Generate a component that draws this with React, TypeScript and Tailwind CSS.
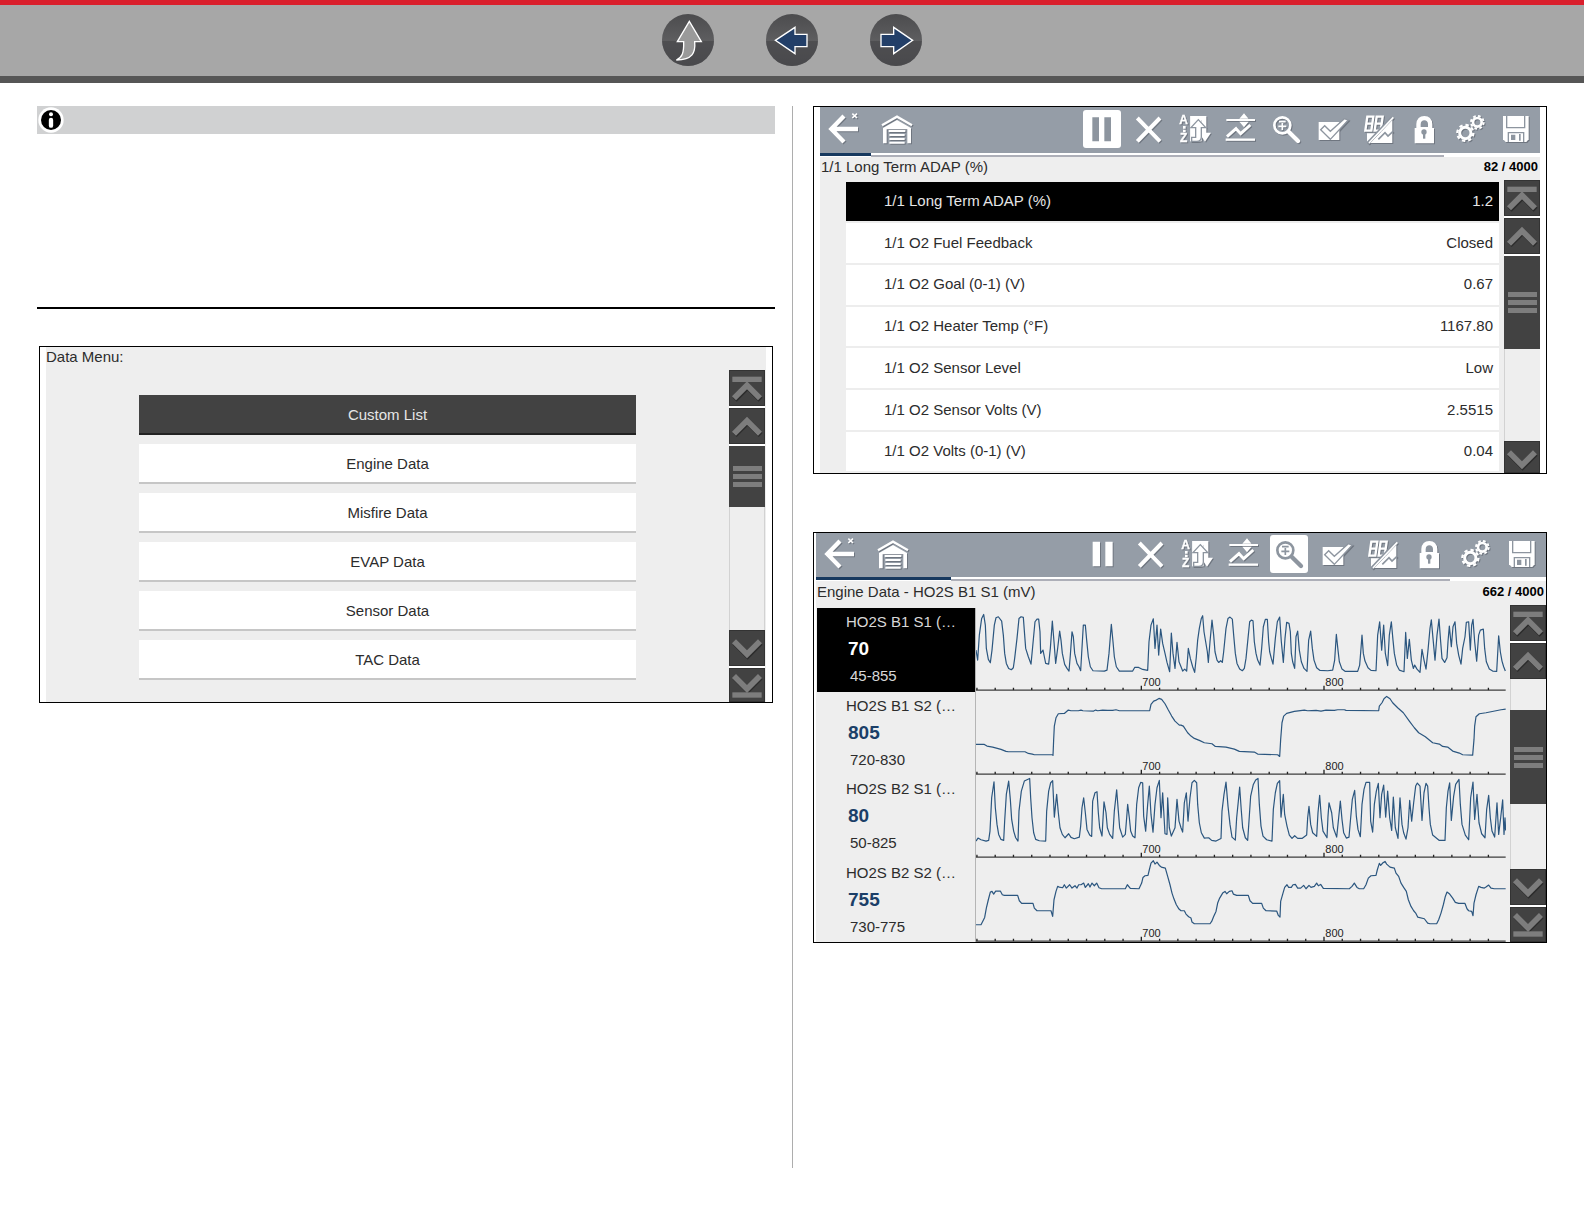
import React from "react";

type Kind = "top" | "up" | "down" | "bottom";

const arrowPaths: Record<Kind, { d: string; bar?: number; label: string }> = {
  top: { d: "M15 85 54 46 93 85", bar: 20, label: "Scroll to top" },
  up: { d: "M15 77 54 38 93 77", label: "Scroll up" },
  down: { d: "M15 34 54 73 93 34", label: "Scroll down" },
  bottom: { d: "M15 24 54 63 93 24", bar: 73, label: "Scroll to bottom" },
};

function ScrollButton({ kind, className = "h-9" }: { kind: Kind; className?: string }) {
  const a = arrowPaths[kind];
  return (
    <button aria-label={a.label} className={`w-9 shrink-0 overflow-hidden bg-[#424242] outline-1 -outline-offset-1 outline-[#333] ${className}`}>
      <svg viewBox="0 0 108 108" className="block h-9 w-9" fill="none">
        <path d={a.d} stroke="#2c2c2c" strokeWidth="17" transform="translate(2 4)" />
        <path d={a.d} stroke="#7d7d7d" strokeWidth="17" />
        {a.bar !== undefined && <path d={`M10 ${a.bar + 8}h88`} stroke="#7d7d7d" strokeWidth="16" />}
      </svg>
    </button>
  );
}

function Thumb({ className }: { className: string }) {
  return (
    <div className={`flex w-9 shrink-0 flex-col items-center justify-center gap-[3px] bg-[#424242] ${className}`}>
      <span className="h-[5px] w-[29px] bg-[#7d7d7d]" />
      <span className="h-[5px] w-[29px] bg-[#7d7d7d]" />
      <span className="h-[5px] w-[29px] bg-[#7d7d7d]" />
    </div>
  );
}

const G = "#8d959f";

function Arrow() {
  return (
    <g fill="none" stroke="#fff">
      <path d="M60 18 22 57l38 39M22 57h80" strokeWidth="13" />
      <path d="m85 11 14 13m0-13L85 24" strokeWidth="5" />
    </g>
  );
}

function Garage() {
  return (
    <g>
      <path d="M12 46 57 20l45 26" fill="none" stroke="#fff" strokeWidth="7" />
      <path d="M15 100V54l42-24 42 24v46H88V58H26v42z" fill="#fff" />
      <path d="M32 63h50M34 75h46M34 87h46M34 98h46" stroke="#fff" strokeWidth="6" />
    </g>
  );
}

const tools: { label: string; icon: (on: boolean) => React.ReactNode }[] = [
  {
    label: "Pause",
    icon: (on) => <path d={on ? "M28 22h20v72H28zM64 22h20v72H64z" : "M26 20h22v74H26zM64 20h22v74H64z"} fill={on ? G : "#fff"} />,
  },
  { label: "Clear", icon: () => <path d="m25 24 68 70M93 24 25 94" stroke="#fff" strokeWidth="12" /> },
  {
    label: "Sort",
    icon: () => (
      <g>
        <g fill="#fff" stroke="#fff" strokeWidth="1" fontFamily="Liberation Sans" fontWeight="700" fontSize="36">
          <text x="13" y="43">A</text>
          <text x="15" y="96">Z</text>
        </g>
        <path d="M24 48h8v8h-8zM24 59h8v8h-8z" fill="#fff" />
        <path d="M46 18h48v50h14L90 95 72 68h8V30H60v64H46z" fill="#fff" />
        <path d="M46 18h34v76H46z" fill="#fff" />
        <path d="M70 29 92 53H79v28q0 13-14 13H50V82h12V53H48z" fill="#fff" stroke={G} strokeWidth="4" />
      </g>
    ),
  },
  {
    label: "Scale",
    icon: () => (
      <g fill="none" stroke="#fff">
        <path d="M16 30h86" strokeWidth="6" />
        <path d="m69 10 14 16H55zM69 52l14-17H55z" fill="#fff" stroke="none" />
        <path d="m18 80 27-24 14 15 29-26" strokeWidth="9" />
        <path d="M14 89h88" strokeWidth="7" />
      </g>
    ),
  },
  {
    label: "Zoom",
    icon: (on) => (
      <g fill="none" stroke={on ? G : "#fff"}>
        <circle cx="46" cy="46" r="24" strokeWidth="8" />
        <path d="M36 35h20M34 49h24M46 39v21" strokeWidth="5" />
        <path d="m65 65 28 28" strokeWidth="13" strokeLinecap="round" />
      </g>
    ),
  },
  {
    label: "Select",
    icon: () => (
      <g>
        <path d="M17 36h62v54H17z" fill="#fff" />
        <path d="m23 59 12-12 17 17 42-38 12 4-54 58z" fill="#fff" stroke={G} strokeWidth="4" />
      </g>
    ),
  },
  {
    label: "Graph or list",
    icon: () => (
      <g>
        <path d="M100 30v69H34z" fill="#fff" />
        <path d="M24 70h34L24 97z" fill="#fff" />
        <g fill="none" stroke="#fff" strokeWidth="7">
          <path d="M25 20h18l-6 42H19zM22 41h18M53 20h18l-6 42H47zM50 41h18" />
        </g>
        <path d="M100 22 26 100" stroke={G} strokeWidth="10" />
        <path d="M103 22 30 99" stroke="#fff" strokeWidth="5" />
        <path d="m58 88 20-20 9 10 15-14" fill="none" stroke={G} strokeWidth="5" />
      </g>
    ),
  },
  {
    label: "Lock",
    icon: () => (
      <g>
        <path d="M29 100V54h5V42Q36 18 58 18t24 24v12h5v46z" fill="#fff" />
        <path d="M47 51V42q1-11 11-11t11 11v9z" fill={G} />
        <circle cx="57" cy="66" r="8" fill={G} />
        <path d="M54 66h7v20h-7z" fill={G} />
      </g>
    ),
  },
  {
    label: "Settings",
    icon: () => (
      <g fill="none" stroke="#fff">
        <circle cx="43" cy="69" r="17" strokeWidth="9" />
        <circle cx="43" cy="69" r="24" strokeWidth="7" strokeDasharray="10 8.8" />
        <circle cx="79" cy="37" r="13" strokeWidth="8" />
        <circle cx="79" cy="37" r="19" strokeWidth="6" strokeDasharray="8 6.9" />
      </g>
    ),
  },
  {
    label: "Save",
    icon: () => (
      <g>
        <path d="M18 18h77v70l-7 8H26l-8-8z" fill="#fff" />
        <path d="M29 18v35h54V18M34 96V68h46v28" fill="none" stroke={G} strokeWidth="4" />
        <path d="M42 74h13v16H42zM66 72h5v20h-5z" fill={G} />
      </g>
    ),
  },
];

function IconButton({ label, on = false, children }: { label: string; on?: boolean; children: React.ReactNode }) {
  return (
    <button aria-label={label} aria-pressed={on} className={`h-[38px] w-[38px] shrink-0 rounded-[3px] ${on ? "bg-white" : ""}`}>
      <svg viewBox="0 0 114 114" className={`block h-[38px] w-[38px] ${on ? "" : "drop-shadow-[1px_1px_0px_#6f7680]"}`}>
        {children}
      </svg>
    </button>
  );
}

function Toolbar({ active, className, toolsClass }: { active: string; className: string; toolsClass: string }) {
  return (
    <div className={`flex items-center justify-between bg-[#959da7] pb-0.5 pl-1 ${className}`}>
      <div className="flex gap-4">
        <IconButton label="Back"><Arrow /></IconButton>
        <IconButton label="Garage"><Garage /></IconButton>
      </div>
      <div className={`flex justify-between ${toolsClass}`}>
        {tools.map((t) => (
          <IconButton key={t.label} label={t.label} on={t.label === active}>
            {t.icon(t.label === active)}
          </IconButton>
        ))}
      </div>
    </div>
  );
}

function Progress({ done, rest }: { done: string; rest: string }) {
  return (
    <div className="flex h-1 bg-white">
      <div className={`h-[3px] bg-[#17395f] ${done}`} />
      <div className="flex flex-1 items-end">
        <div className={`h-0.5 bg-[#adafb8] ${rest}`} />
      </div>
    </div>
  );
}

const menu = ["Custom List", "Engine Data", "Misfire Data", "EVAP Data", "Sensor Data", "TAC Data"];

function DataMenu() {
  return (
    <div className="mx-0.5 mt-[37px] border border-black bg-white px-1.5">
      <div className="flex bg-[#eee] pr-px">
        <div className="flex-1">
          <h2 className="leading-5">Data Menu:</h2>
          <div className="flex flex-col gap-[9px] px-[93px] pt-7 pb-[22px]">
            {menu.map((m, i) => (
              <button
                key={m}
                className={i === 0 ? "h-10 border-b-2 border-[#222] bg-[#424242] pt-0.5 text-[#e6e6e6]" : "h-10 border-b-2 border-[#c6c6c6] bg-white pt-0.5"}
              >
                {m}
              </button>
            ))}
          </div>
        </div>
        <div className="mt-[23px] flex w-9 flex-col">
          <div className="flex flex-col gap-0.5 bg-white pb-0.5">
            <ScrollButton kind="top" />
            <ScrollButton kind="up" />
          </div>
          <Thumb className="h-[61px]" />
          <div className="flex-1 border-x border-[#d2d2d2]" />
          <div className="flex flex-col gap-0.5 bg-white">
            <ScrollButton kind="down" />
            <ScrollButton kind="bottom" className="h-[34px]" />
          </div>
        </div>
      </div>
    </div>
  );
}

const params = [
  ["Long Term ADAP (%)", "1.2"],
  ["O2 Fuel Feedback", "Closed"],
  ["O2 Goal (0-1) (V)", "0.67"],
  ["O2 Heater Temp (°F)", "1167.80"],
  ["O2 Sensor Level", "Low"],
  ["O2 Sensor Volts (V)", "2.5515"],
  ["O2 Volts (0-1) (V)", "0.04"],
];

function ParameterList() {
  return (
    <div className="border border-black bg-white px-1.5">
      <Toolbar active="Pause" className="h-[46px] pr-[5px]" toolsClass="w-[452px]" />
      <div className="bg-[#eee]">
        <Progress done="w-[51px]" rest="w-[573px]" />
        <div className="flex items-center justify-between pl-px leading-5">
          <h2>1/1 Long Term ADAP (%)</h2>
          <span className="pr-0.5 text-[13px] font-bold text-black">82 / 4000</span>
        </div>
        <div className="flex pt-[3px]">
          <div className="flex-1 pt-0.5 pr-[5px] pl-[26px]">
            <table className="h-[289px] w-full border-collapse bg-white">
              <tbody>
                {params.map(([name, value], i) => (
                  <tr key={name} className={i === 0 ? "bg-black text-[#e6e6e6]" : "border-t-2 border-[#ededed]"}>
                    <td className="p-0 pl-[38px]">1/1 {name}</td>
                    <td className="p-0 pr-1.5 text-right">{value}</td>
                  </tr>
                ))}
              </tbody>
            </table>
          </div>
          <div className="flex w-9 flex-col">
            <div className="flex flex-col gap-0.5 bg-white pb-0.5">
              <ScrollButton kind="top" />
              <ScrollButton kind="up" />
            </div>
            <Thumb className="h-[93px]" />
            <div className="h-[92px] border-l border-[#d2d2d2]" />
            <ScrollButton kind="down" className="h-8" />
          </div>
        </div>
      </div>
    </div>
  );
}

/* Each trace is recorded in two spans; x and y are thirds of a pixel. */
const channels = [
  {
    name: "HO2S B1 S1 (…",
    value: "70",
    range: "45-855",
    y: 249,
    first:
      "515,375 520,405 525,330 532,280 538,268 543,300 546,370 552,403 558,413 563,375 570,300 575,278 582,275 592,288 597,330 601,385 606,415 613,430 621,434 627,428 631,400 638,340 644,280 650,275 657,277 661,330 664,370 672,395 680,417 685,365 692,290 698,282 703,282 707,320 709,385 716,375 720,395 724,415 733,417 738,370 744,288 749,350 754,415 760,370 766,318 770,345 774,385 781,418 788,430 794,438 798,390 803,320 807,335 811,385 818,415 824,425 829,437 832,385 837,300 843,300 847,345 852,395 858,425 866,437 900,438 908,435 914,385 921,298 926,350 930,395 936,425 945,438 985,438 991,427 1003,427 1015,433 1030,436 1034,350 1040,300 1047,281 1052,370 1058,300 1063,390 1069,312 1075,355 1082,385 1088,412 1096,440 1101,324 1106,385 1112,430 1118,352 1124,410",
    second:
      "5,425 10,438 16,432 22,438 27,370 33,400 40,425 46,442 51,395 55,345 60,310 66,280 70,272 74,320 79,350 84,380 87,412 92,350 98,285 103,330 107,380 113,405 118,412 124,407 129,412 133,380 140,310 146,280 152,276 159,282 163,330 168,385 173,415 181,432 189,437 195,430 200,400 206,340 211,290 216,285 221,287 225,350 230,385 235,405 242,420 247,370 252,305 258,283 264,283 268,350 271,380 276,400 281,417 288,340 294,290 301,276 306,350 312,412 317,340 322,292 329,295 333,320 336,385 340,410 346,430 350,335 355,318 360,375 366,410 374,430 383,439 388,345 394,318 399,370 404,405 412,428 422,436 445,437 460,435 466,405 471,328 476,375 480,410 488,432 498,439 535,439 541,420 545,370 548,330 552,385 557,408 566,428 575,436 590,437 595,330 601,290 607,375 613,300 618,385 625,422 630,330 636,290 641,345 645,385 652,420 660,435 674,440 679,322 684,400 690,343 696,405 702,430 706,420 713,432 722,442 728,373 734,405 740,432 746,375 752,310 756,284 761,340 767,405 773,330 779,282 784,350 788,400 796,412 803,398 806,350 810,303 816,365 821,305 827,290 832,355 838,390 845,417 850,370 857,335 861,292 868,290 873,375 877,300 881,283 886,350 892,408 898,330 903,315 912,312 916,370 921,410 930,432 940,438 952,439 958,332 963,380 968,408 973,425 978,438",
  },
  {
    name: "HO2S B1 S2 (…",
    value: "805",
    range: "720-830",
    y: 498,
    first:
      "515,655 540,655 548,660 565,663 590,670 605,676 612,677 662,677 672,682 684,684 690,686 745,686 746,688 748,640 750,600 755,575 762,563 780,562 792,552 800,554 822,554 830,552 836,554 868,555 874,552 880,554 895,552 910,553 925,553 935,551 945,554 1036,554 1040,535 1048,525 1056,522 1064,517 1072,520 1082,533 1092,552 1102,570 1112,585 1125,597",
    second:
      "5,597 12,600 25,620 35,630 45,637 60,643 75,650 98,653 108,661 140,663 165,669 180,676 225,678 235,684 295,686 301,691 304,640 308,590 313,570 322,562 345,556 375,552 385,554 410,553 425,555 440,552 465,553 475,551 495,551 500,553 598,554 600,540 608,530 614,518 622,511 632,518 640,530 655,545 672,560 690,585 705,605 718,620 738,632 760,650 780,654 790,661 805,663 820,675 840,681 850,686 880,687 884,640 886,600 890,572 900,563 920,560 950,554 965,551 979,549",
  },
  {
    name: "HO2S B2 S1 (…",
    value: "80",
    range: "50-825",
    y: 132,
    first:
      "515,330 521,321 530,326 545,330 553,328 557,300 562,200 569,152 573,230 578,280 583,310 590,325 598,328 601,270 606,190 613,150 618,205 622,265 628,300 634,320 641,330 644,240 651,180 660,150 676,142 679,200 683,260 688,305 694,325 705,329 724,330 727,240 733,180 739,155 745,149 750,258 757,190 762,245 767,290 774,310 782,320 793,308 800,319 810,323 825,318 829,285 833,230 838,200 843,245 848,295 856,312 862,316 865,210 872,185 878,182 882,245 886,290 893,315 899,212 905,245 909,290 916,310 925,322 930,240 937,176 942,240 946,290 955,318 963,310 967,260 970,220 975,260 979,300 985,315 992,320 997,220 1003,170 1009,154 1015,155 1018,255 1024,300 1030,220 1035,165 1040,250 1046,303 1052,220 1058,170 1065,148 1070,260 1075,185 1082,308 1088,310 1090,200 1095,290 1101,315 1112,290 1118,205 1124,270",
    second:
      "5,290 10,303 15,215 21,185 26,270 32,200 38,155 45,148 52,155 55,220 60,275 66,305 75,321 88,320 97,328 110,330 125,322 128,240 134,190 140,153 146,225 152,280 158,318 168,327 172,260 177,210 181,168 186,240 190,290 198,320 205,328 210,255 214,195 222,160 229,147 236,142 240,220 245,285 251,315 262,326 278,330 282,235 288,185 294,157 301,149 305,258 312,190 316,250 323,285 330,312 338,322 346,314 355,322 368,322 382,312 385,260 389,226 394,280 400,305 412,316 416,245 421,193 426,260 431,300 443,320 446,255 449,215 457,245 462,290 472,318 478,260 483,210 488,265 493,305 501,321 509,318 514,260 519,205 526,178 531,255 536,295 543,317 548,220 554,175 560,154 571,154 574,270 580,303 585,220 591,180 597,157 602,260 607,190 613,162 619,258 625,180 631,260 637,298 642,198 648,290 656,322 662,200 668,280 673,305 680,324 686,290 691,208 697,270 703,215 709,165 714,156 722,165 728,268 734,185 740,157 745,165 749,230 753,280 760,312 770,320 780,328 797,328 801,230 806,180 811,155 816,268 823,195 829,160 839,145 843,220 848,280 858,312 868,326 874,200 881,153 886,265 893,190 899,275 907,308 917,320 922,235 928,193 933,260 938,300 946,318 953,215 958,310 964,260 970,206 974,310 977,260 979,298",
  },
  {
    name: "HO2S B2 S2 (…",
    value: "755",
    range: "730-775",
    y: 383,
    first:
      "515,580 530,580 535,570 541,558 546,530 552,505 558,482 563,480 568,488 574,479 588,479 594,490 600,492 640,492 645,508 652,516 686,516 690,530 698,538 740,538 745,555 749,505 755,480 760,465 765,467 775,469 780,460 786,470 796,460 803,470 812,463 818,470 823,460 830,460 838,455 843,468 852,457 857,467 863,455 870,463 877,455 884,469 892,472 963,472 969,460 978,471 1004,472 1012,455 1016,438 1022,433 1031,432 1035,415 1040,395 1047,388 1052,398 1058,392 1065,402 1071,407 1083,410 1090,435 1097,460 1103,485 1109,503 1116,520 1124,533 1130,538",
    second:
      "15,538 20,548 28,556 35,560 38,572 45,577 92,577 97,570 103,555 110,540 115,515 121,500 130,485 137,480 142,487 150,480 158,478 162,488 172,492 207,492 212,508 220,516 247,516 252,530 260,538 292,539 297,552 302,557 304,510 311,485 316,468 323,460 328,468 336,468 341,460 348,459 355,470 364,470 373,462 380,472 389,462 395,468 405,465 412,455 417,463 424,459 432,471 510,472 518,465 525,455 533,468 540,472 553,472 560,460 567,440 575,433 590,432 594,415 600,396 604,402 611,394 617,390 622,398 632,407 645,410 650,425 658,435 665,455 673,468 681,480 687,505 695,525 703,538 709,545 715,557 735,562 745,575 752,577 772,577 778,565 785,545 792,520 798,495 803,482 811,488 820,500 828,513 838,516 857,516 863,532 868,538 877,540 881,553 884,515 890,490 898,465 905,468 915,470 920,467 928,461 935,470 945,472 979,472",
  },
];

const shift = (pts: string, dx: number, dy: number) =>
  pts
    .split(" ")
    .map((p) => {
      const [x, y] = p.split(",").map(Number);
      return `${x + dx},${y + dy}`;
    })
    .join(" ");

const ticks = Array.from({ length: 29 }, (_, i) => ({ x: 498 + 54.8 * (i - 9), major: i === 9 || i === 19 }));

function Graph({ channel }: { channel: (typeof channels)[number] }) {
  const points = `${shift(channel.first, -513, -channel.y)} ${shift(channel.second, 612, -channel.y)}`;
  return (
    <svg viewBox="2 0 1590 250" className="block h-full w-full" role="img" aria-label={`${channel.name} graph`}>
      <polyline points={points} fill="none" stroke="#2b567f" strokeWidth="3.6" strokeLinejoin="round" />
      <path d="M0 246h1591" stroke="#3c3c3c" strokeWidth="4" />
      {ticks.map((t) => (
        <path key={t.x} d={t.major ? `M${t.x} 233v13` : `M${t.x} 239v7`} stroke="#222" strokeWidth="4" />
      ))}
      <g fontFamily="Liberation Sans" fontSize="33" fill="#222">
        <text x="501" y="234">700</text>
        <text x="1050" y="234">800</text>
      </g>
    </svg>
  );
}

function GraphView() {
  return (
    <div className="mt-[58px] border border-black bg-white pl-0.5">
      <Toolbar active="Zoom" className="h-11 pr-[5px]" toolsClass="w-[457px]" />
      <div className="bg-[#eee]">
        <Progress done="w-[135px]" rest="w-[499px]" />
        <div className="flex items-center justify-between pl-px leading-[22px]">
          <h2>Engine Data - HO2S B1 S1 (mV)</h2>
          <span className="pr-0.5 text-[13px] font-bold text-black">662 / 4000</span>
        </div>
        <div className="flex pt-0.5">
          <div className="grid h-[337px] flex-1 grid-rows-4 pt-[3px] pl-px">
            {channels.map((c, i) => (
              <div key={c.name} className="flex min-h-0">
                <div className={`w-[158px] shrink-0 leading-[27px] ${i === 0 ? "bg-black text-[#d8d8d8]" : ""}`}>
                  <div className="pl-[29px]">{c.name}</div>
                  <div className={`pl-[31px] text-[19px] font-bold ${i === 0 ? "text-white" : "text-[#1b3f68]"}`}>{c.value}</div>
                  <div className="pl-[33px]">{c.range}</div>
                </div>
                <div className="min-w-0 flex-1 border-l border-[#b5b5b5]">
                  <Graph channel={c} />
                </div>
              </div>
            ))}
          </div>
          <div className="ml-1 flex w-9 flex-col">
            <div className="flex flex-col gap-0.5 bg-white">
              <ScrollButton kind="top" />
              <ScrollButton kind="up" />
            </div>
            <div className="h-[31px] border-l border-[#d2d2d2]" />
            <Thumb className="h-[94px]" />
            <div className="flex-1 border-l border-[#d2d2d2]" />
            <div className="flex flex-col gap-0.5 bg-white">
              <ScrollButton kind="down" />
              <ScrollButton kind="bottom" className="h-[35px]" />
            </div>
          </div>
        </div>
      </div>
    </div>
  );
}

function NavButton({ label, d, fill }: { label: string; d: string; fill: string }) {
  return (
    <a href="#" aria-label={label} className="block h-[52px] w-[52px] overflow-hidden rounded-full bg-linear-to-b from-[#4c4c4e] via-[#5d5d5f] via-50% to-[#515153]">
      <svg viewBox="0 0 156 156" className="block h-[52px] w-[52px]">
        <path d="M0 81h156v75H0z" fill="#454547" opacity="0.6" />
        <path d={d} fill={fill} stroke="#fff" strokeWidth="4" />
      </svg>
    </a>
  );
}

export default function App() {
  return (
    <div className="flex min-h-screen flex-col bg-white font-['Liberation_Sans',sans-serif] text-[15px] text-[#2c2c2c]">
      <header className="border-t-[5px] border-b-[7px] border-t-[#da1f2c] border-b-[#565656] bg-[#a7a7a7]">
        <nav className="flex h-[71px] items-center justify-center gap-[52px] pb-0.5">
          <NavButton label="Up" fill="#9a9a9a" d="M82 22 118 83H98C101 116 92 137 43 138 60 130 66 118 65 83H46z" />
          <NavButton label="Previous" fill="#233f68" d="M28 79 87 40v21h36v37H87v21z" />
          <NavButton label="Next" fill="#233f68" d="M128 79 71 40v21H33v37h38v21z" />
        </nav>
      </header>
      <main className="grid flex-1 grid-cols-2 px-[37px] pt-[23px] pb-14">
        <div className="min-w-0 pr-[17px]">
          <section className="min-h-[203px] border-b-2 border-black">
            <div className="flex h-7 items-center bg-[#d0d1d2] pl-px">
              <svg viewBox="0 0 78 78" className="h-[26px] w-[26px]" role="img" aria-label="Note">
                <circle cx="39" cy="39" r="38" fill="#fff" />
                <circle cx="39" cy="39" r="30" fill="#000" />
                <circle cx="39" cy="22" r="6" fill="#fff" />
                <path d="M39 39v17" stroke="#fff" strokeWidth="13" strokeLinecap="round" />
              </svg>
            </div>
          </section>
          <DataMenu />
        </div>
        <div className="min-w-0 border-l border-[#adadad] pl-5">
          <ParameterList />
          <GraphView />
        </div>
      </main>
    </div>
  );
}
